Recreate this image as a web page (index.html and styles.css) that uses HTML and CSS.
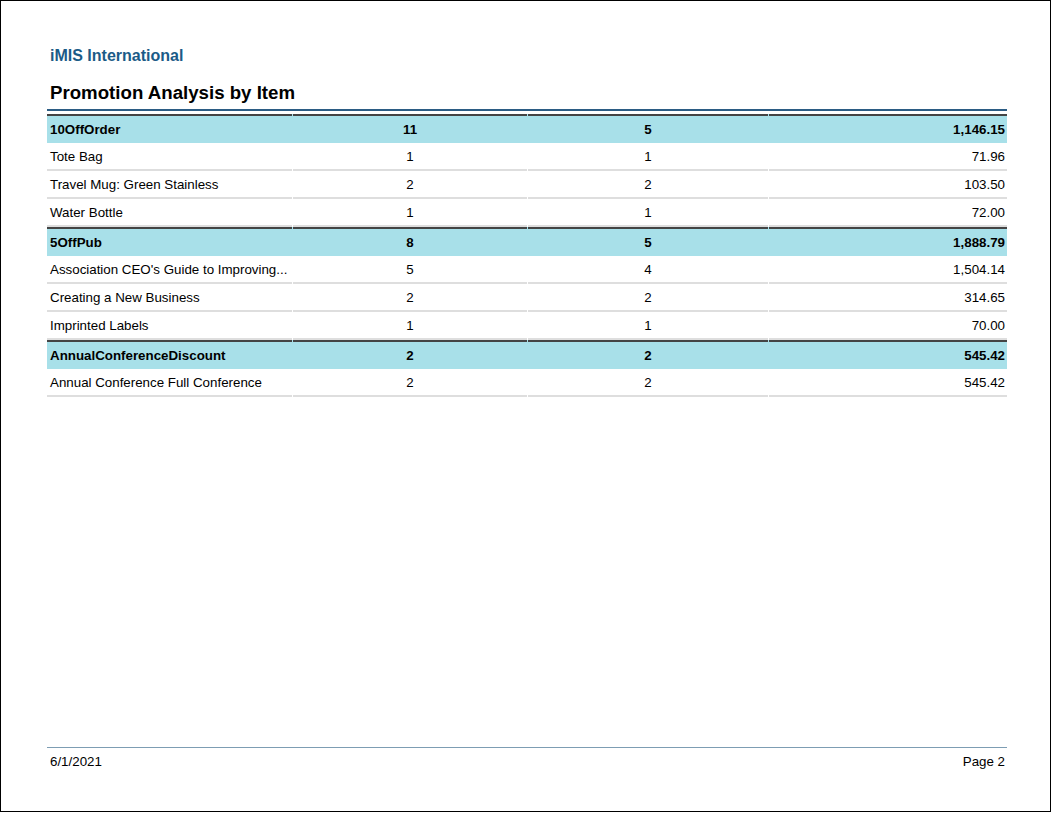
FILE: index.html
```html
<!DOCTYPE html>
<html>
<head>
<meta charset="utf-8">
<link rel="stylesheet" href="styles.css">
</head>
<body>
<div class="page">
  <div class="org">iMIS International</div>
  <h1 class="title">Promotion Analysis by Item</h1>
  <div class="rule"></div>
  <div class="table">
    <div class="row group"><div class="c1">10OffOrder</div><div class="c2">11</div><div class="c3">5</div><div class="c4">1,146.15</div></div>
    <div class="row item"><div class="c1">Tote Bag</div><div class="c2">1</div><div class="c3">1</div><div class="c4">71.96</div></div>
    <div class="row item"><div class="c1">Travel Mug: Green Stainless</div><div class="c2">2</div><div class="c3">2</div><div class="c4">103.50</div></div>
    <div class="row item"><div class="c1">Water Bottle</div><div class="c2">1</div><div class="c3">1</div><div class="c4">72.00</div></div>
    <div class="row group"><div class="c1">5OffPub</div><div class="c2">8</div><div class="c3">5</div><div class="c4">1,888.79</div></div>
    <div class="row item"><div class="c1">Association CEO's Guide to Improving...</div><div class="c2">5</div><div class="c3">4</div><div class="c4">1,504.14</div></div>
    <div class="row item"><div class="c1">Creating a New Business</div><div class="c2">2</div><div class="c3">2</div><div class="c4">314.65</div></div>
    <div class="row item"><div class="c1">Imprinted Labels</div><div class="c2">1</div><div class="c3">1</div><div class="c4">70.00</div></div>
    <div class="row group"><div class="c1">AnnualConferenceDiscount</div><div class="c2">2</div><div class="c3">2</div><div class="c4">545.42</div></div>
    <div class="row item"><div class="c1">Annual Conference Full Conference</div><div class="c2">2</div><div class="c3">2</div><div class="c4">545.42</div></div>
  </div>
  <div class="footer">
    <span>6/1/2021</span>
    <span>Page 2</span>
  </div>
</div>
</body>
</html>
```

FILE: styles.css
```css
html, body {
  margin: 0;
  padding: 0;
  background: #fff;
}
body {
  font-family: "Liberation Sans", Arial, sans-serif;
  font-size: 13.33px;
  color: #000;
}
.page {
  width: 960px;
  height: 810px;
  border: 1px solid #000;
  padding: 0 43px 0 46px;
  box-sizing: content-box;
  display: flex;
  flex-direction: column;
}
.org {
  margin-top: 46px;
  padding-left: 3px;
  font-size: 16px;
  line-height: 18px;
  font-weight: bold;
  color: #1b5b87;
}
.title {
  margin: 17px 0 0;
  padding-left: 3px;
  font-size: 18.67px;
  line-height: 22px;
  font-weight: bold;
}
.rule {
  margin-top: 5px;
  height: 2px;
  background: #2b5c84;
}
.table {
  margin-top: 3px;
  display: flex;
  flex-direction: column;
}
.row {
  display: grid;
  grid-template-columns: 245px 234px 240px 238px;
  column-gap: 1px;
  align-items: stretch;
}
.row > div {
  display: flex;
  align-items: center;
  white-space: nowrap;
  line-height: 15px;
}
.group {
  background: #a8e0e9;
  font-weight: bold;
}
.group > div {
  border-top: 2px solid #444;
  height: 27px;
}
.item > div {
  border-bottom: 2px solid #dedede;
  height: 26px;
}
.c1 { padding-left: 3px; }
.c2, .c3 { justify-content: center; }
.c4 { justify-content: flex-end; padding-right: 2px; }
.footer {
  margin-top: auto;
  margin-bottom: 42px;
  border-top: 1px solid #7d9db3;
  display: flex;
  justify-content: space-between;
  padding: 6px 2px 0 3px;
  line-height: 15px;
}
```
